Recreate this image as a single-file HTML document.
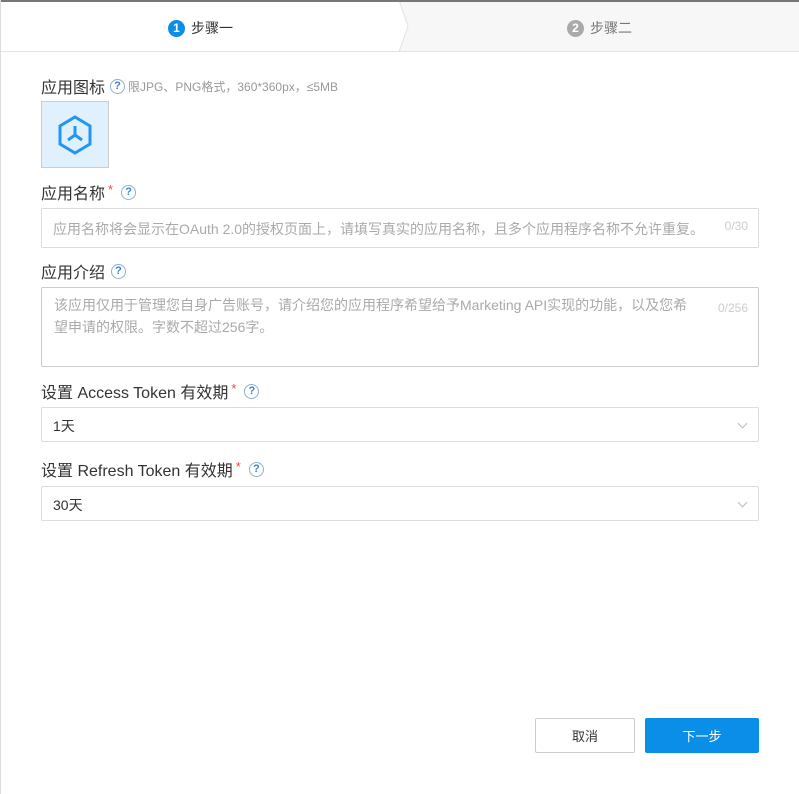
<!DOCTYPE html>
<html><head><meta charset="utf-8"><style>
*{box-sizing:border-box;margin:0;padding:0}
body{width:799px;height:794px;background:#fff;font-family:"Liberation Sans","Noto Sans CJK SC",sans-serif;position:relative;overflow:hidden}
.hdr{position:absolute;left:0;top:0;width:799px;height:52px;border-bottom:1px solid #e5e5e5;background:#f7f7f7}
.s1{position:absolute;left:0;top:0;width:400px;height:51px;background:#fff}
.step{position:absolute;top:18px;font-size:14px;display:flex;align-items:center}
.num{width:17px;height:17px;border-radius:50%;color:#fff;font-size:12px;font-weight:bold;display:inline-flex;align-items:center;justify-content:center;margin-right:6px}
.lbl{position:absolute;left:41px;font-size:16px;color:#333;display:flex;align-items:center}
.q{display:inline-flex;width:15px;height:15px;border:1px solid #8ab0d8;border-radius:50%;color:#3a7fd0;font-size:11px;font-weight:bold;align-items:center;justify-content:center;margin-left:6px}
.star{color:#f04646;font-size:13px;margin-left:3px;position:relative;top:-3px}
.box{position:absolute;left:41px;width:718px;border:1px solid #dcdcdc;border-radius:2px;font-size:14px}
.ph{color:#aaa}
.cnt{position:absolute;right:10px;color:#ccc;font-size:12px}
.chev{position:absolute;right:12px;top:12px;width:7px;height:7px;border-right:1px solid #bbb;border-bottom:1px solid #bbb;transform:rotate(45deg)}
.btn{position:absolute;top:718px;height:35px;border-radius:2px;font-size:13px;display:flex;align-items:center;justify-content:center}
</style></head><body>
<div class="hdr">
<div class="s1"></div>
<svg style="position:absolute;left:398px;top:0" width="14" height="52"><path d="M1 0 L10 26 L1 52" fill="#fff" stroke="#e3e3e3" stroke-width="1"/></svg>
<div class="step" style="left:168px;color:#333"><span class="num" style="background:#0a8ee8">1</span>步骤一</div>
<div class="step" style="left:567px;color:#777"><span class="num" style="background:#aaa">2</span>步骤二</div>
</div>
<div style="position:absolute;left:0;top:0;width:799px;height:2px;background:#777"></div>
<div style="position:absolute;left:0;top:0;width:1px;height:794px;background:#ddd"></div>
<div class="lbl" style="top:74px">应用图标<span class="q" style="margin-left:5px">?</span><span style="font-size:12px;color:#999;margin-left:3px">限JPG、PNG格式，360*360px，≤5MB</span></div>
<div style="position:absolute;left:41px;top:101px;width:68px;height:67px;background:#e1f0fd;border:1px solid #ccc"></div>
<svg style="position:absolute;left:56px;top:115px" width="38" height="40" viewBox="0 0 38 40"><path d="M19 2 L34 11 L34 29 L19 38 L4 29 L4 11 Z" fill="none" stroke="#2196f3" stroke-width="3"/><path d="M19 11 V20 M19 20 L12 25 M19 20 L26 25" stroke="#2196f3" stroke-width="3" fill="none"/></svg>
<div class="lbl" style="top:180px">应用名称<span class="star">*</span><span class="q" style="margin-left:8px">?</span></div>
<div class="box" style="top:208px;height:40px;padding:10px 11px"><span class="ph">应用名称将会显示在OAuth 2.0的授权页面上，请填写真实的应用名称，且多个应用程序名称不允许重复。</span><span class="cnt" style="top:10px">0/30</span></div>
<div class="lbl" style="top:259px">应用介绍<span class="q">?</span></div>
<div class="box" style="top:287px;height:80px;padding:6px 68px 0 12px;line-height:22px;border-color:#ccc"><span class="ph">该应用仅用于管理您自身广告账号，请介绍您的应用程序希望给予Marketing API实现的功能，以及您希望申请的权限。字数不超过256字。</span><span class="cnt" style="top:9px">0/256</span></div>
<div class="lbl" style="top:379px">设置 Access Token 有效期<span class="star">*</span><span class="q" style="margin-left:8px">?</span></div>
<div class="box" style="top:407px;height:35px;padding:8px 11px;color:#333">1天<span class="chev"></span></div>
<div class="lbl" style="top:457px">设置 Refresh Token 有效期<span class="star">*</span><span class="q" style="margin-left:8px">?</span></div>
<div class="box" style="top:486px;height:35px;padding:8px 11px;color:#333">30天<span class="chev"></span></div>
<div class="btn" style="left:535px;width:100px;border:1px solid #ccc;color:#333">取消</div>
<div class="btn" style="left:645px;width:114px;background:#0a8ee8;color:#fff">下一步</div>
</body></html>
